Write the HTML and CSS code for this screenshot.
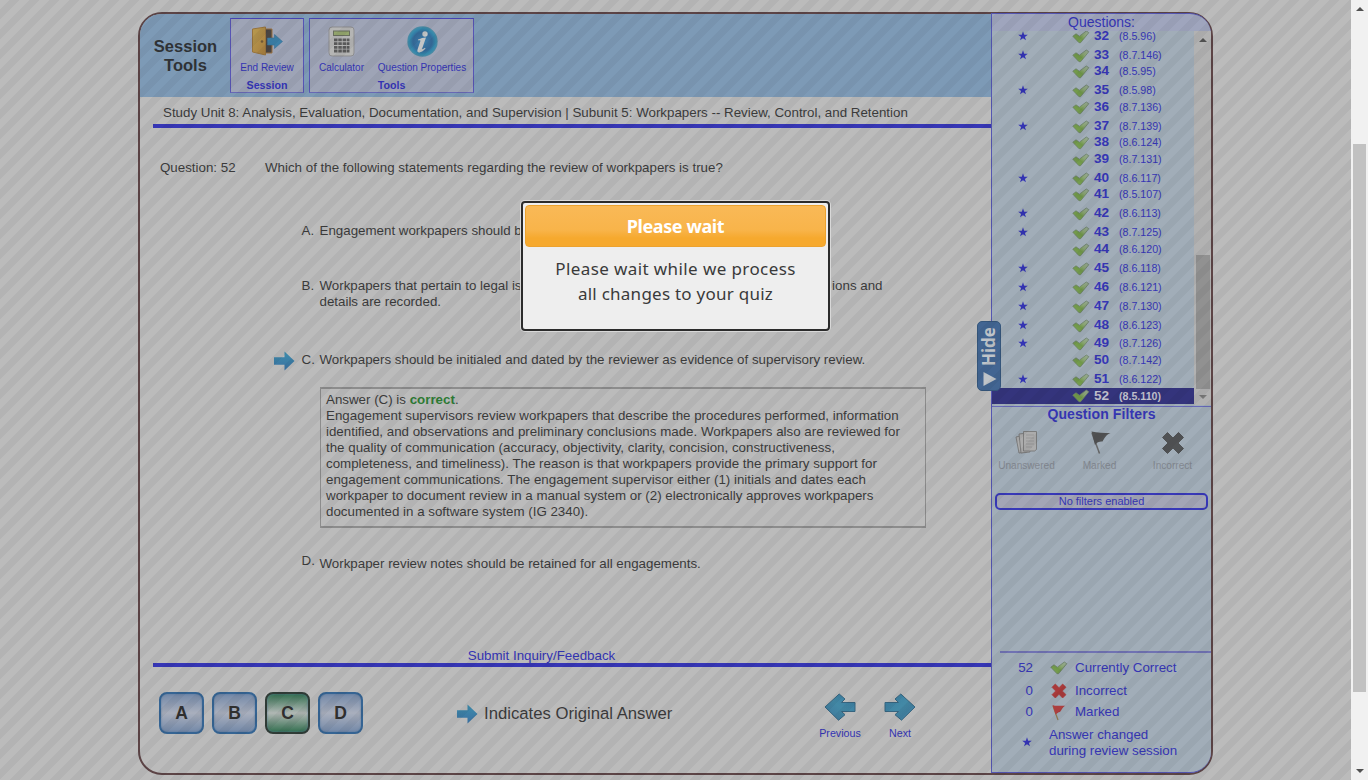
FILE: index.html
```html
<!DOCTYPE html>
<html lang="en">
<head>
<meta charset="utf-8">
<title>Quiz review</title>
<link rel="stylesheet" href="styles.css">
</head>
<body>
<svg class="defs" width="0" height="0">
  <defs>
    <linearGradient id="gBlue" x1="0" y1="0" x2="0" y2="1"><stop offset="0" stop-color="#3e8dab"/><stop offset="1" stop-color="#3a70a2"/></linearGradient>
    <linearGradient id="gTeal" x1="0" y1="0" x2="1" y2="1"><stop offset="0" stop-color="#3a7ba0"/><stop offset=".5" stop-color="#4389a6"/><stop offset="1" stop-color="#3e7599"/></linearGradient>
    <linearGradient id="gCheck" x1="1" y1="0" x2="0" y2="1"><stop offset="0" stop-color="#98a899"/><stop offset=".35" stop-color="#8aa573"/><stop offset=".55" stop-color="#6f9748"/><stop offset="1" stop-color="#7ea553"/></linearGradient>
    <linearGradient id="gDoor" x1="0" y1="0" x2="1" y2="1"><stop offset="0" stop-color="#b89b50"/><stop offset="1" stop-color="#a67c3d"/></linearGradient>
    <radialGradient id="gInfo"><stop offset="0" stop-color="#3c7fac"/><stop offset=".62" stop-color="#356b9a"/><stop offset=".85" stop-color="#3489ac"/><stop offset="1" stop-color="#4f8ba3"/></radialGradient>
    <symbol id="check" viewBox="0 0 18 14"><path d="M.8 6.200 4 3.800 7.400 6.200 14.300 1 16.800 2.700 8.600 12.700 7 12.700Z" fill="url(#gCheck)" stroke="#6a7f66" stroke-width=".8" stroke-linejoin="round"/></symbol>
    <symbol id="star" viewBox="0 0 10 10"><path d="M5 .3 6.200 3.700 9.800 3.800 6.900 5.900 8 9.300 5 7.300 2 9.300 3.100 5.900 .2 3.800 3.800 3.700Z" fill="#3434b4"/></symbol>
    <symbol id="arrow" viewBox="0 0 22 20"><path d="M1 6.200h10.500V.5L21.500 10 11.500 19.500v-5.700H1Z" fill="url(#gBlue)"/></symbol>
    <symbol id="nav" viewBox="0 0 32 28"><path d="M1 9.500h13.500l-3.500-3.500 5.800-5L31 14 17.500 27.200 11 21.700l3.500-3.200H1Z" fill="url(#gTeal)" stroke="#37647f" stroke-width="1"/></symbol>
    <symbol id="cross" viewBox="0 0 24 24"><path d="M6.500 1.500 12 7l5.500-5.500 5 5L17 12l5.500 5.500-5 5L12 17l-5.500 5.500-5-5L7 12 1.500 6.500Z" fill="currentColor" stroke="currentColor" stroke-linejoin="round"/></symbol>
  </defs>
</svg>
<div class="window">
  <div class="page">
    <div class="quiz">
      <main class="content">
        <header class="toolbar">
          <h1 class="toolbar-title">Session<br>Tools</h1>
          <section class="group session-group">
            <div class="tools">
              <div class="tool">
                <svg width="34" height="30" viewBox="0 0 34 30"><path d="M15 3h7v24h-7z" fill="#4a4542" stroke="#9a7242"/><path d="M2.500 3 15.500 1v28l-13-3z" fill="url(#gDoor)" stroke="#97733d"/><circle cx="12" cy="15.500" r="1.300" fill="#6e5736"/><path d="M17.500 12h7V8.500l8 7-8 7V19h-7Z" fill="#3c80a8" stroke="#3a7195" stroke-width=".6"/></svg>
                <span>End Review</span>
              </div>
            </div>
            <b class="group-name">Session</b>
          </section>
          <section class="group tools-group">
            <div class="tools">
              <div class="tool">
                <svg width="28" height="31" viewBox="0 0 28 31"><rect x="1" y="1" width="25" height="29" rx="3" fill="#b5b5b4" stroke="#8d8d8f"/><rect x="5.500" y="5" width="16" height="4.500" fill="#93a56c" stroke="#686e5d"/><g fill="#5a5a5a"><path d="M6 12.500h3.500v2.800H6zM10.300 12.500h3.500v2.800h-3.500zM14.600 12.500h3.500v2.800h-3.500zM18.700 12.500h2.800v2.800h-2.800zM6 16.200h3.500V19H6zM10.300 16.200h3.500V19h-3.500zM14.600 16.200h3.500V19h-3.500zM18.700 16.200h2.800V19h-2.800zM6 19.900h3.500v2.800H6zM10.300 19.900h3.500v2.800h-3.500zM14.600 19.900h3.500v2.800h-3.500zM18.700 19.900h2.800v2.800h-2.800zM6 23.600h3.500v2.800H6zM10.300 23.600h3.500v2.800h-3.500zM14.600 23.600h3.500v2.800h-3.500zM18.700 23.600h2.800v2.800h-2.800z"/></g></svg>
                <span>Calculator</span>
              </div>
              <div class="tool">
                <svg width="31" height="31" viewBox="0 0 31 31"><circle cx="15.500" cy="15.500" r="15.200" fill="url(#gInfo)"/><circle cx="18" cy="8" r="2.700" fill="#c3c5c6"/><path d="M11 13.500c3-1.300 5.500-2 8-2l-3.800 11c-.3 1.200.8.900 2.800-.7l.5.800c-3 3.300-5.200 4.300-7.200 3.600-1.300-.5-1-2-.5-3.500l2.700-8c-.7-.5-1.500-.4-2.500-.2Z" fill="#c3c5c6"/></svg>
                <span>Question Properties</span>
              </div>
            </div>
            <b class="group-name">Tools</b>
          </section>
        </header>
        <div class="unit">Study Unit 8: Analysis, Evaluation, Documentation, and Supervision | Subunit 5: Workpapers -- Review, Control, and Retention</div>
        <article class="question">
          <div class="prompt"><span class="number">Question: 52</span><span>Which of the following statements regarding the review of workpapers is true?</span></div>
          <div class="answer answer-a"><span class="mark"></span><span class="letter">A.</span><span>Engagement workpapers should be</span></div>
          <div class="answer answer-b"><span class="mark"></span><span class="letter">B.</span><div class="answer-body"><div class="split"><span>Workpapers that pertain to legal iss</span><span>ions and</span></div>details are recorded.</div></div>
          <div class="answer answer-c"><span class="mark"><svg width="22" height="20"><use href="#arrow"/></svg></span><span class="letter">C.</span><span>Workpapers should be initialed and dated by the reviewer as evidence of supervisory review.</span></div>
          <div class="explanation">
            Answer (C) is <b class="correct">correct</b>.<br>
            Engagement supervisors review workpapers that describe the procedures performed, information<br>
            identified, and observations and preliminary conclusions made. Workpapers also are reviewed for<br>
            the quality of communication (accuracy, objectivity, clarity, concision, constructiveness,<br>
            completeness, and timeliness). The reason is that workpapers provide the primary support for<br>
            engagement communications. The engagement supervisor either (1) initials and dates each<br>
            workpaper to document review in a manual system or (2) electronically approves workpapers<br>
            documented in a software system (IG 2340).
          </div>
          <div class="answer answer-d"><span class="mark"></span><span class="letter">D.</span><span>Workpaper review notes should be retained for all engagements.</span></div>
        </article>
        <div class="feedback">Submit Inquiry/Feedback</div>
        <footer class="controls">
          <div class="choices"><button class="choice">A</button><button class="choice">B</button><button class="choice chosen">C</button><button class="choice">D</button></div>
          <div class="legend"><svg width="22" height="20"><use href="#arrow"/></svg><span>Indicates Original Answer</span></div>
          <div class="step"><svg class="flip" width="32" height="28"><use href="#nav"/></svg><span>Previous</span></div>
          <div class="step"><svg width="32" height="28"><use href="#nav"/></svg><span>Next</span></div>
        </footer>
      </main>
      <aside class="sidebar">
        <div class="side-title">Questions:</div>
        <div class="list">
          <div class="rows" id="rows"></div>
          <div class="list-bar"><i class="up"></i><i class="list-thumb"></i><i class="down"></i></div>
        </div>
        <div class="filters">
          <div class="filters-title">Question Filters</div>
          <div class="filter-icons">
            <div class="filter"><svg width="26" height="26" viewBox="0 0 26 26"><g fill="#acacac" stroke="#777" stroke-width=".9"><path d="m2 7 8-2 3 17-8 1Z"/><path d="m5 4 9-1 2 19-9 1Z"/><path d="M9.500 1.500h13v18l-2 1.500h-11Z"/></g><path d="M12 5h8M12 8h8M12 11h8M12 14h8M12 17h6" stroke="#989898"/></svg><span>Unanswered</span></div>
            <div class="filter"><svg width="26" height="26" viewBox="0 0 26 26"><path d="M5 3 12.500 23.500" stroke="#686868" stroke-width="1.500"/><path d="M4.500 1.500c6 1.500 12 1.500 19 1.500-5 2-6 5.500-8 8.500-4 0-5.500 1-7.500 3.500Z" fill="#515253"/></svg><span>Marked</span></div>
            <div class="filter dark"><svg width="26" height="26" viewBox="-1 -1 26 26"><use href="#cross" width="24" height="24"/></svg><span>Incorrect</span></div>
          </div>
          <div class="filter-state">No filters enabled</div>
        </div>
        <div class="stats">
          <div class="stat"><span class="count">52</span><svg width="18" height="14"><use href="#check"/></svg><span>Currently Correct</span></div>
          <div class="stat"><span class="count">0</span><svg class="red" width="18" height="16"><use href="#cross"/></svg><span>Incorrect</span></div>
          <div class="stat marked"><span class="count">0</span><svg width="18" height="17" viewBox="0 0 18 17"><path d="M3 2 8 16" stroke="#94794f" stroke-width="1.200"/><path d="M2.500 1c4 1.500 6 .5 12.500.8-3 1.700-3 4-5 6.200-2 .2-3 1.500-4.500 2.500Z" fill="#ac3f3f"/></svg><span>Marked</span></div>
          <div class="stat changed"><svg class="count-star" width="10" height="10"><use href="#star"/></svg><span>Answer changed<br>during review session</span></div>
        </div>
      </aside>
      <div class="hide-tab"><svg width="14" height="14" viewBox="0 0 14 14"><path d="M.500 0v14L13.500 7Z" fill="#bfc4c9"/></svg><span>Hide</span></div>
    </div>
    <div class="overlay"></div>
  </div>
  <div class="scrollbar"><i class="up"></i><i class="thumb"></i><i class="down"></i></div>
  <div class="dialog">
    <div class="dialog-title">Please wait</div>
    <div class="dialog-text">Please wait while we process<br><span class="second">all changes to your quiz</span></div>
  </div>
</div>
<script src="rows.js"></script>
</body>
</html>
```
FILE: rows.js
```js
// number, subunit reference, changed flag, row height
const data = [
  [32, '8.5.96', 1, 19], [33, '8.7.146', 1, 16], [34, '8.5.95', 0, 19], [35, '8.5.98', 1, 17],
  [36, '8.7.136', 0, 19], [37, '8.7.139', 1, 16], [38, '8.6.124', 0, 17], [39, '8.7.131', 0, 19],
  [40, '8.6.117', 1, 16], [41, '8.5.107', 0, 19], [42, '8.6.113', 1, 19], [43, '8.7.125', 1, 17],
  [44, '8.6.120', 0, 19], [45, '8.6.118', 1, 19], [46, '8.6.121', 1, 19], [47, '8.7.130', 1, 19],
  [48, '8.6.123', 1, 18], [49, '8.7.126', 1, 17], [50, '8.7.142', 0, 19], [51, '8.6.122', 1, 18],
  [52, '8.5.110', 0, 16]
];
document.getElementById('rows').innerHTML = data.map(([n, ref, changed, h]) =>
  `<div class="row${n === 52 ? ' current' : ''}" style="height:${h}px">
    <span class="row-star">${changed ? '<svg width="10" height="10"><use href="#star"/></svg>' : ''}</span>
    <svg class="row-check" width="18" height="14"><use href="#check"/></svg>
    <b class="row-num">${n}</b><span class="row-ref">(${ref})</span>
  </div>`).join('');
```
FILE: styles.css
```css
* { box-sizing: border-box; }
body { margin: 0; font-family: "Liberation Sans", Arial, sans-serif; font-size: 13.333px; line-height: 16px; color: #3b3b3b; overflow: hidden; }
svg { display: block; flex: none; }
.defs { position: absolute; }
.window { position: relative; display: flex; width: 1368px; height: 780px; }
.page { position: relative; width: 1351px; height: 780px; padding: 12px 0 0 138px; background: #bbb; }
.overlay { position: absolute; inset: 0; background: repeating-linear-gradient(135deg, transparent 0 7.071px, rgba(0, 0, 10, .045) 7.071px 14.142px); }
.quiz { position: relative; display: flex; width: 1075px; height: 763px; border: 2px solid #5c4446; border-radius: 24px; }
.content { width: 851px; display: flex; flex-direction: column; }
.toolbar { display: flex; height: 83px; background: #7d9ab6; border-radius: 21px 0 0 0; padding-top: 4px; }
.toolbar-title { width: 91px; margin: 19px -1px 0 0; font-size: 16.5px; line-height: 19px; text-align: center; color: #303336; }
.group { height: 75px; border: 1px solid #4945b8; border-color: #4945b8 #5754b4 #6868b4; background: #9ea4b6; color: #3434b4; text-align: center; }
.session-group { width: 74px; margin-right: 5px; }
.tools-group { width: 165px; }
.tools { display: flex; height: 59px; }
.tool { display: flex; flex-direction: column; align-items: center; height: 59px; padding-top: 7px; font-size: 10px; line-height: 12px; white-space: nowrap; }
.tool span { margin-top: auto; padding-bottom: 4px; }
.session-group .tool { width: 72px; }
.tools-group .tool { width: 63px; }
.tools-group .tool + .tool { width: 98px; }
.group-name { display: block; font-size: 10.667px; line-height: 14px; }
.unit { width: 838px; height: 31px; margin-left: 13px; padding: 8px 0 0 10px; border-bottom: 4px solid #3636b5; white-space: nowrap; }
.question { height: 520px; padding: 32px 0 0 20px; white-space: nowrap; }
.prompt { display: flex; }
.number { width: 105px; }
.answer { display: flex; }
.mark { width: 28.500px; margin-left: 113px; }
.letter { width: 18px; flex: none; }
.answer-a { margin-top: 47px; }
.answer-b { margin-top: 39px; }
.answer-b .split { display: flex; justify-content: space-between; width: 563px; }
.answer-c { height: 16px; margin-top: 42px; }
.answer-c .mark svg { margin-top: -1px; }
.explanation { width: 606px; height: 141px; margin: 19px 0 0 160px; border: 2px solid #8c8c8c; border-left-width: 1px; border-right-width: 1px; padding: 3px 0 0 5px; }
.correct { color: #2e7b35; }
.answer-d { margin-top: 28px; }
.answer-d .letter { margin-top: -3px; }
.feedback { width: 838px; height: 19px; margin-left: 13px; border-bottom: 4px solid #3636b5; padding-right: 61px; text-align: center; color: #3434b4; line-height: 16px; }
.controls { display: flex; padding: 25px 0 0 19px; }
.choices { display: flex; gap: 8px; width: 298px; }
.choice { width: 45px; height: 42px; padding: 0; border: 2px solid #356493; border-radius: 8px; background: linear-gradient(#7489a8, #a9afbd 50%, #7489a8); box-shadow: inset 0 0 2px #53769b; font: bold 17.5px/38px "Liberation Sans", sans-serif; color: #303030; }
.chosen { border-color: #303c37; background: linear-gradient(#346f50, #b0b7b4 50%, #346f50); }
.legend { display: flex; align-items: center; gap: 6px; width: 354px; height: 42px; margin-left: -1px; padding-top: 1px; font-size: 16.7px; }
.step { width: 60px; display: flex; flex-direction: column; align-items: center; gap: 4px; font-size: 10.667px; color: #3434b4; margin-top: 1px; }
.flip { transform: scaleX(-1); }
.sidebar { width: 220px; height: 760px; margin-top: -1px; display: flex; flex-direction: column; border: 1px solid #5456b2; border-right: 0; border-radius: 0 21px 21px 0; background: linear-gradient(#9fa5bd 0 17px, #a1adb8 17px); overflow: hidden; color: #3636b5; }
.side-title { height: 17px; font-size: 14px; line-height: 17px; text-align: center; }
.list { display: flex; height: 374px; overflow: hidden; }
.rows { flex: 1; margin-top: -4px; }
.row { display: flex; align-items: flex-start; line-height: 17px; }
.row-star { width: 80px; padding: 4px 0 0 25.500px; }
.row-check { margin-top: 3px; }
.row-num { width: 25px; margin-left: 4px; font-size: 13.600px; font-weight: bold; line-height: 17px; }
.row-ref { font-size: 10.667px; line-height: 19px; }
.current { background: #34347c; color: #c0c0cc; }
.current .row-ref { font-weight: bold; line-height: 16px; }
.current .row-num { line-height: 16px; }
.current .row-check { margin-top: 1px; }
.list-bar { position: relative; width: 17px; background: #b2b2b2; }
.up, .down { position: absolute; left: 5px; border: 4px solid transparent; border-top: 0; border-bottom: 4px solid #505050; }
.list-bar .up { top: 7px; }
.down { border-bottom: 0; border-top: 4px solid #505050; }
.list-bar .down { bottom: 6px; border-top-color: #777; }
.list-thumb { position: absolute; left: 2px; top: 224px; width: 14px; height: 134px; background: #919191; }
.filters { flex: 1; border-top: 1px solid #6668b8; margin-top: 1px; }
.filters-title { font-size: 14px; font-weight: bold; line-height: 15px; text-align: center; letter-spacing: .1px; }
.filter-icons { display: flex; padding: 8px 0 0; margin-left: -2px; }
.filter { width: 73px; display: flex; flex-direction: column; align-items: center; gap: 4px; font-size: 10.100px; line-height: 12px; color: #838890; }
.dark { color: #515355; }
.dark span { color: #838890; }
.filter-state { height: 17px; margin: 21px 3px 0; border: 2px solid #3838b8; border-radius: 5px; background: #a3a5b6; text-align: center; font-size: 11px; line-height: 13px; }
.stats { height: 121px; margin-left: 8px; border-top: 2px solid #7072b2; padding-top: 3px; }
.stat { display: flex; align-items: center; height: 23px; line-height: 16px; }
.stat > svg { margin: 0 7px 0 17px; }
.count { width: 33px; text-align: right; }
.stat .red { color: #a93a3a; }
.stat.marked { height: 20px; }
.stat.changed { height: 42px; }
.stat > .count-star { margin: -3px 17px 0 22px; }
.hide-tab { position: absolute; left: 837px; top: 307px; width: 24px; height: 70px; border: 1px solid #35567b; border-radius: 5px; background: #426592; color: #bfc4c9; display: flex; flex-direction: column-reverse; align-items: center; padding-bottom: 4px; gap: 6px; }
.hide-tab svg { transform: translateX(1px); }
.hide-tab span { writing-mode: vertical-rl; transform: rotate(180deg); font: bold 17px/22px "Noto Sans", sans-serif; }
.scrollbar { position: relative; width: 17px; height: 780px; background: #f1f1f1; }
.scrollbar .up { top: 7px; }
.scrollbar .down { bottom: 7px; }
.thumb { position: absolute; left: 2px; top: 144px; width: 13px; height: 548px; background: #c1c1c1; }
.dialog { position: absolute; left: 521px; top: 201px; width: 309px; height: 130px; border: 2px solid #2b2b2b; border-radius: 4px; box-shadow: 0 0 0 1px #d8d8d8; background: #eee; padding: 2px; text-align: center; font-family: "Noto Sans", sans-serif; color: #3a3a3a; }
.dialog-title { height: 42px; border: 1px solid #eca22f; border-radius: 4px; background: linear-gradient(#f9b957, #f8b44a 60%, #f6a92e 80%, #f6a92e); color: #fff; font-size: 18px; line-height: 41px; font-weight: bold; letter-spacing: -.4px; }
.dialog-text { padding-top: 9px; font-size: 17px; line-height: 25px; letter-spacing: .4px; }
.second { letter-spacing: .25px; }
```
